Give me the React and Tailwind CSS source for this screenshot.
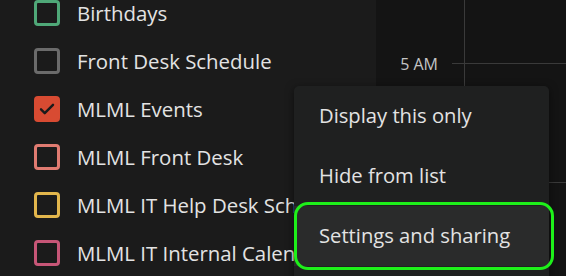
import React from 'react';

const calendars = [
    { name: 'Birthdays', color: '#4fa878', checked: false },
    { name: 'Front Desk Schedule', color: '#6b6b6b', checked: false },
    { name: 'MLML Events', color: '#d84b32', checked: true },
    { name: 'MLML Front Desk', color: '#e07b71', checked: false },
    { name: 'MLML IT Help Desk Schedule', color: '#e2b64c', checked: false },
    { name: 'MLML IT Internal Calendar', color: '#c75677', checked: false },
];

const menuItems = ['Display this only', 'Hide from list', 'Settings and sharing'];

function CalendarRow({ name, color, checked }) {
    return (
        <div className="flex items-center h-[48px] pl-[34px] gap-[17px]">
            <div
                className="w-[26px] h-[26px] rounded-[4px] border-[3px] flex items-center justify-center shrink-0"
                style={{ borderColor: color, backgroundColor: checked ? color : 'transparent' }}
            >
                {checked && (
                    <svg width="18" height="18" viewBox="0 0 24 24" fill="none">
                        <path d="M4 12.5l5 5L20 6.5" stroke="#1b1b1b" strokeWidth="3.2" strokeLinecap="round" strokeLinejoin="round" />
                    </svg>
                )}
            </div>
            <span className="text-[20.4px] text-[#e3e3e3] whitespace-nowrap">{name}</span>
        </div>
    );
}

export default function App() {
    return (
        <div className="relative w-[566px] h-[276px] overflow-hidden flex font-['Open_Sans',sans-serif]">
            <div className="w-[376px] bg-[#1b1b1b] shrink-0 overflow-hidden">
                <div className="-mt-[11px]">
                    {calendars.map((c) => (
                        <CalendarRow key={c.name} {...c} />
                    ))}
                </div>
            </div>

            {/* day grid */}
            <div className="flex-1 flex bg-[#141414]">
                <div className="w-[76px] shrink-0 flex flex-col">
                    <div className="h-[64px] flex items-end justify-end pr-[14px]">
                        <span className="text-[16px] leading-none text-[#c4c4c4] translate-y-[8px]">5 AM</span>
                    </div>
                </div>
                <div className="w-[12px] shrink-0 flex flex-col">
                    <div className="h-[64px] border-b border-[#3a3a3a]" />
                </div>
                <div className="flex-1 flex flex-col border-l border-[#3a3a3a]">
                    <div className="h-[64px] border-b border-[#3a3a3a]" />
                    <div className="h-[119px] border-b border-[#3a3a3a]" />
                </div>
            </div>

            {/* context menu */}
            <div className="absolute left-[294px] top-[86px] w-[255px] h-[200px] bg-[#1f2020] rounded-[5px] shadow-[0_2px_8px_rgba(0,0,0,0.5)] flex flex-col">
                {menuItems.map((label, i) => (
                    <div
                        key={label}
                        className={`flex items-center h-[60px] pl-[25px] pb-[2px] text-[20.2px] text-[#e3e3e3] ${i === 2 ? 'bg-[#2a2b2b]' : ''}`}
                    >
                        {label}
                    </div>
                ))}
            </div>

            <div className="absolute left-[294px] top-[202px] w-[260px] h-[68px] rounded-[14px] border-[3px] border-[#1ef01a]" />
        </div>
    );
}
